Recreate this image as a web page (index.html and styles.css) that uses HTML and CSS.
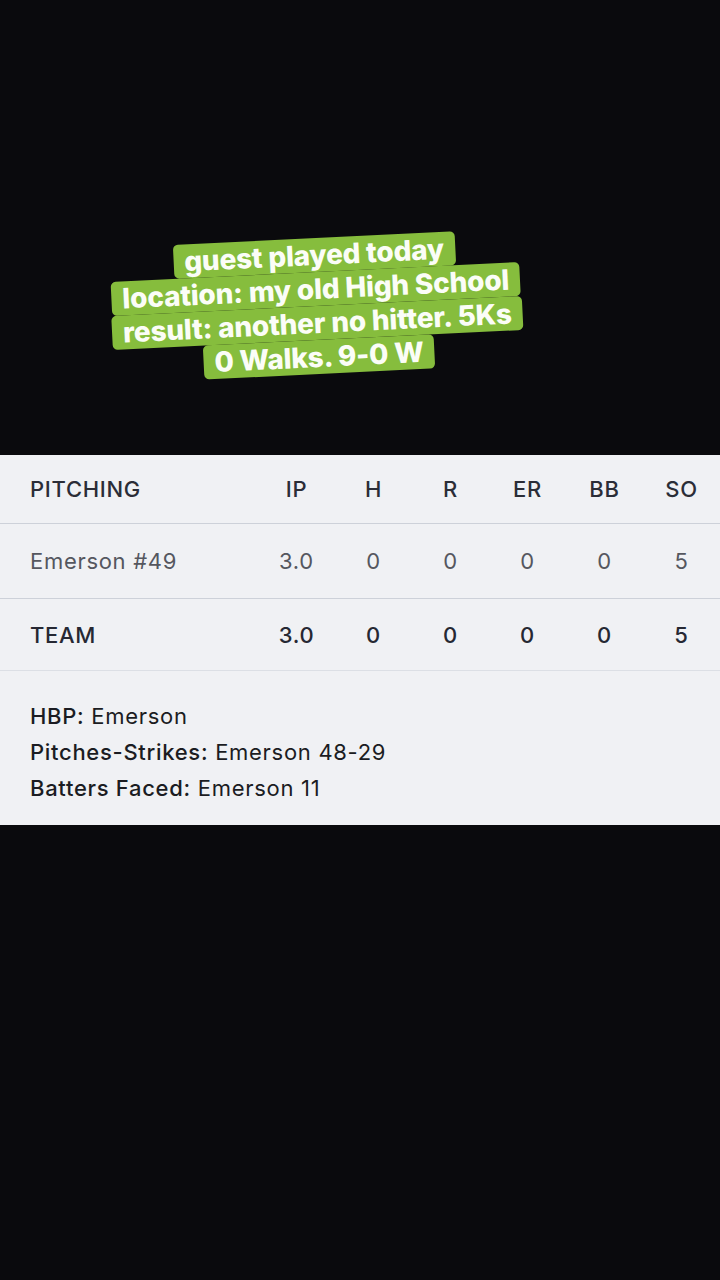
FILE: index.html
```html
<!DOCTYPE html>
<html lang="en">
<head>
    <meta charset="UTF-8">
    <meta name="viewport" content="width=device-width, initial-scale=1.0">
    <title>Pitching Box Score</title>
    <link rel="stylesheet" href="styles.css">
</head>
<body>
    <div class="top">
        <div class="caption">
            <span class="line">guest played today</span>
            <span class="line">location: my old High School</span>
            <span class="line">result: another no hitter. 5Ks</span>
            <span class="line">0 Walks. 9-0 W</span>
        </div>
    </div>

    <div class="card">
        <table class="box">
            <thead>
                <tr>
                    <th class="name">PITCHING</th>
                    <th>IP</th>
                    <th>H</th>
                    <th>R</th>
                    <th>ER</th>
                    <th>BB</th>
                    <th>SO</th>
                </tr>
            </thead>
            <tbody>
                <tr class="player">
                    <td class="name">Emerson #49</td>
                    <td>3.0</td>
                    <td>0</td>
                    <td>0</td>
                    <td>0</td>
                    <td>0</td>
                    <td>5</td>
                </tr>
                <tr class="team">
                    <td class="name">TEAM</td>
                    <td>3.0</td>
                    <td>0</td>
                    <td>0</td>
                    <td>0</td>
                    <td>0</td>
                    <td>5</td>
                </tr>
            </tbody>
        </table>

        <div class="notes">
            <p><b>HBP:</b> Emerson</p>
            <p><b>Pitches-Strikes:</b> Emerson 48-29</p>
            <p><b>Batters Faced:</b> Emerson 11</p>
        </div>
    </div>
</body>
</html>
```

FILE: styles.css
```css
body {
    margin: 0;
    background: #0a0a0d;
    font-family: Inter, "Noto Sans", sans-serif;
    width: 720px;
    height: 1280px;
    overflow: hidden;
}

.top {
    height: 455px;
    display: flex;
    justify-content: center;
    padding-top: 238px;
    box-sizing: border-box;
}

.caption {
    display: flex;
    flex-direction: column;
    align-items: center;
    transform: rotate(-2.8deg);
    margin-right: 86px;
    align-self: flex-start;
}

.caption .line {
    background: #86bd3d;
    color: #fbfdf7;
    font-weight: 800;
    font-size: 28px;
    line-height: 34px;
    padding: 0 11px;
    border-radius: 5px;
    letter-spacing: -0.2px;
}

.card {
    background: #f0f1f4;
}

.box {
    width: 100%;
    border-collapse: collapse;
    table-layout: fixed;
}

.box th, .box td {
    width: 77px;
    text-align: center;
    font-size: 22px;
    letter-spacing: 0.7px;
    padding: 0;
}

.box .name {
    width: auto;
    text-align: left;
    padding-left: 30px;
}

.box th {
    height: 68px;
    font-weight: 500;
    color: #2b2d37;
    border-bottom: 1.5px solid #cdd1d9;
}

.box .player td {
    height: 74px;
    color: #55575f;
    font-weight: 400;
    border-bottom: 1.5px solid #cdd1d9;
}

.box .team td {
    height: 71px;
    color: #262833;
    font-weight: 500;
    border-bottom: 1px solid #dcdfe5;
}

.notes {
    padding: 27px 30px 19px;
}

.notes p {
    margin: 0;
    font-size: 22px;
    letter-spacing: 0.7px;
    line-height: 36px;
    color: #1b1c22;
}

.notes b {
    font-weight: 500;
}
```
